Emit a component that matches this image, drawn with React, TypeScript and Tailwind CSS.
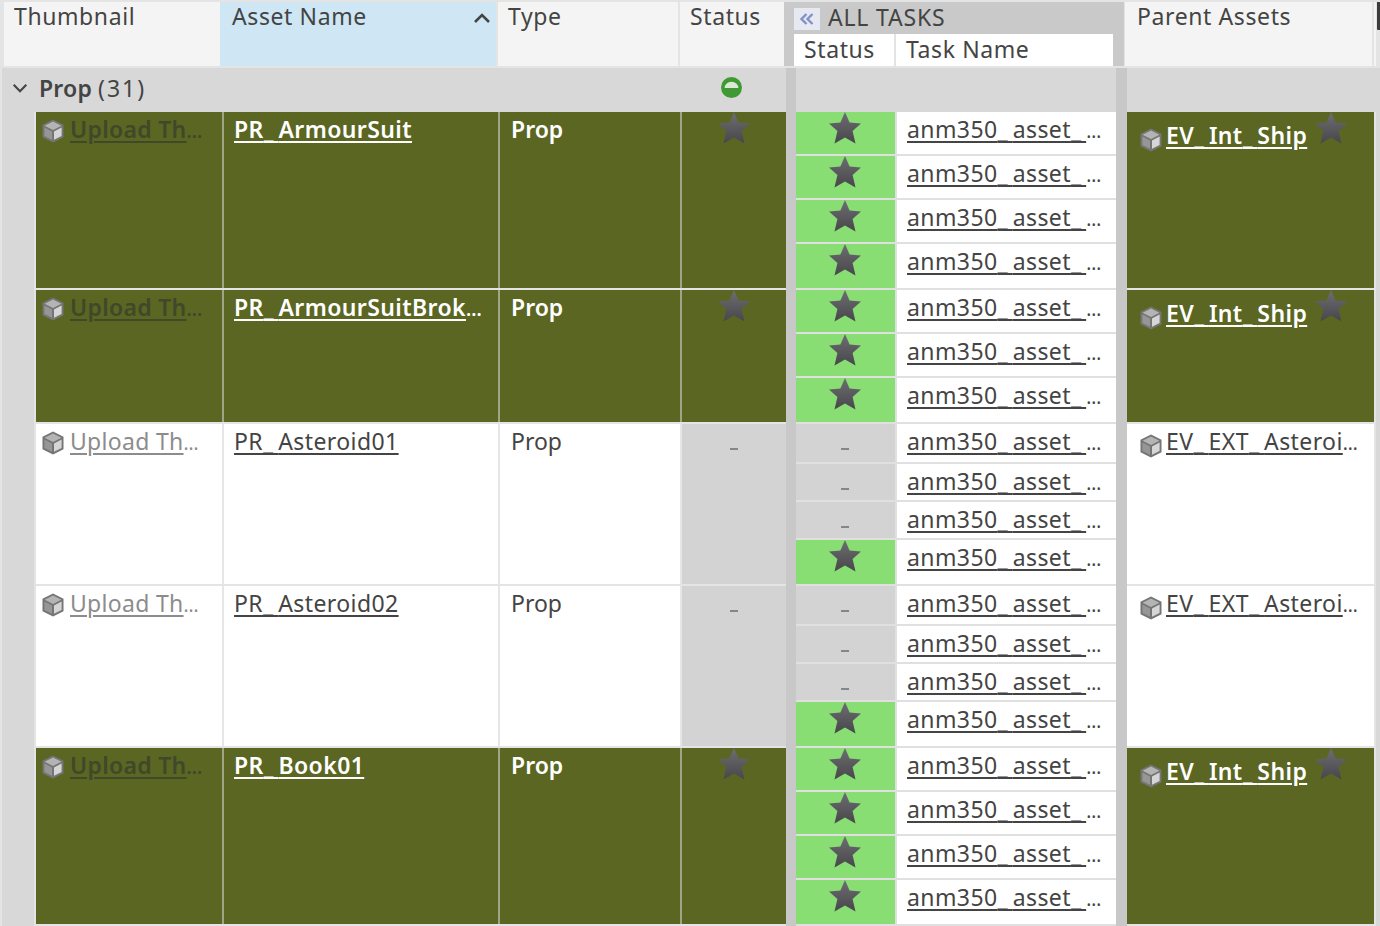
import React from 'react';

type TaskState = 'done' | 'none';

interface AssetRow {
  name: string;
  clipped?: boolean;
  highlighted: boolean;
  parent: string;
  parentClipped?: boolean;
  tasks: { state: TaskState; height: string }[];
}

const done = (height: string) => ({ state: 'done' as TaskState, height });
const none = (height: string) => ({ state: 'none' as TaskState, height });

const rows: AssetRow[] = [
  {
    name: 'PR_ArmourSuit',
    highlighted: true,
    parent: 'EV_Int_Ship',
    tasks: [done('h-[42px]'), done('h-[42px]'), done('h-[42px]'), done('h-[44px]')],
  },
  {
    name: 'PR_ArmourSuitBrok',
    clipped: true,
    highlighted: true,
    parent: 'EV_Int_Ship',
    tasks: [done('h-[42px]'), done('h-[42px]'), done('h-[44px]')],
  },
  {
    name: 'PR_Asteroid01',
    highlighted: false,
    parent: 'EV_EXT_Asteroi',
    parentClipped: true,
    tasks: [none('h-[38px]'), none('h-[36px]'), none('h-[36px]'), done('h-[44px]')],
  },
  {
    name: 'PR_Asteroid02',
    highlighted: false,
    parent: 'EV_EXT_Asteroi',
    parentClipped: true,
    tasks: [none('h-[38px]'), none('h-[36px]'), none('h-[36px]'), done('h-[44px]')],
  },
  {
    name: 'PR_Book01',
    highlighted: true,
    parent: 'EV_Int_Ship',
    tasks: [done('h-[42px]'), done('h-[42px]'), done('h-[42px]'), done('h-[44px]')],
  },
];

const Star = ({ id, className }: { id: string; className: string }) => (
  <svg viewBox="0 0 32 32" className={className}>
    <defs>
      <linearGradient id={id} x1="0" y1="0" x2="0" y2="1">
        <stop offset="0" stopColor="#6e6e72" />
        <stop offset="1" stopColor="#47474b" />
      </linearGradient>
    </defs>
    <path d="M16 0l4.6 10.6 11.4.9-8.4 7.5 2.9 12.5L16 25.5 5.5 31.5 8.4 19 0 11.5l11.4-.9z" fill={`url(#${id})`} />
  </svg>
);

const Cube = ({ className }: { className: string }) => (
  <svg viewBox="0 0 24 24" className={className}>
    <path d="M12 .5l10.5 5.2v12.6L12 23.5 1.5 18.3V5.7z" fill="#757575" />
    <path d="M12 2.5l8.4 4.2L12 11 3.6 6.7z" fill="#b4b4b4" />
    <path d="M3.4 8.4l7.6 4v8.4l-7.6-3.8z" fill="#969696" />
    <path d="M20.6 8.4L13 12.4v8.4l7.6-3.8z" fill="#d6d6d6" />
  </svg>
);

// the underscore is much wider in the original font
const Label = ({ text }: { text: string }) => (
  <span className="underline underline-offset-[3px] decoration-2 tracking-[0.4px] whitespace-nowrap">
    {text.split('_').map((part, i) => (
      <React.Fragment key={i}>
        {i > 0 && <span className="tracking-[5px]">_</span>}
        {part}
      </React.Fragment>
    ))}
  </span>
);

const Dots = () => <span className="text-[19px] tracking-[-0.5px]">…</span>;

const Row = ({ row, index }: { row: AssetRow; index: number }) => {
  const cell = row.highlighted ? 'bg-[#5a6622]' : 'bg-white';
  const text = row.highlighted ? 'font-semibold text-white' : 'text-[#444444]';
  const gap = row.highlighted ? 'bg-[#9fa688]' : 'bg-[#e6e6e6]';

  return (
    <div className="flex">
      <div className="ml-[2px] w-[32px] shrink-0 bg-[#d8d8d8]" />
      <div className="w-[2px] shrink-0 bg-[#e4e4e4]" />
      <div className="shrink-0 bg-[#e4e4e4] pb-[2px]">
        <div className={`flex h-full gap-[2px] ${gap}`}>
          <div className={`w-[186px] ${cell} flex items-start pl-[5px] pt-[2px]`}>
            <Cube className="w-[24px] h-[24px] mt-[5px] shrink-0" />
            <span className={`ml-[5px] whitespace-nowrap ${row.highlighted ? 'font-semibold text-[#40482a]' : 'text-[#8c8c8c]'}`}>
              <span className="underline underline-offset-[3px] decoration-2 tracking-[0.3px]">Upload Th</span>
              <Dots />
            </span>
          </div>
          <div className={`w-[274px] pl-[10px] pt-[2px] whitespace-nowrap ${cell} ${text}`}>
            <Label text={row.name} />
            {row.clipped && <Dots />}
          </div>
          <div className={`w-[180px] pl-[11px] pt-[2px] ${cell} ${text}`}>Prop</div>
          <div className={`w-[104px] flex justify-center ${row.highlighted ? cell : 'bg-[#d3d3d3]'}`}>
            {row.highlighted ? (
              <Star id={`row-star-${index}`} className="w-[32px] h-[32px]" />
            ) : (
              <span className="w-[8px] h-[2px] mt-[24px] bg-[#85858c]" />
            )}
          </div>
        </div>
      </div>
      <div className="w-[10px] shrink-0 bg-[#c8c8c8]" />
      <div className="w-[320px] shrink-0 flex flex-col gap-[2px] bg-[#e0e0e0] pb-[2px]">
        {row.tasks.map((task, i) => (
          <div key={i} className={`flex ${task.height}`}>
            <div className={`w-[99px] pr-[1px] flex justify-center ${task.state === 'done' ? 'bg-[#88dd73]' : 'bg-[#d3d3d3]'}`}>
              {task.state === 'done' ? (
                <Star id={`task-star-${index}-${i}`} className="w-[32px] h-[32px]" />
              ) : (
                <span className="w-[8px] h-[2px] mt-[24px] bg-[#85858c]" />
              )}
            </div>
            <div className="ml-[2px] flex-1 bg-white pl-[10px] pt-[2px] text-[#444444] whitespace-nowrap">
              <Label text="anm350_asset_" />
              <Dots />
            </div>
          </div>
        ))}
      </div>
      <div className="w-[11px] shrink-0 bg-[#c8c8c8]" />
      <div className="w-[247px] shrink-0 bg-[#e4e4e4] pb-[2px]">
        <div className={`flex items-start h-full pl-[12px] ${row.highlighted ? 'pt-[8px]' : 'pt-[2px]'} ${cell} ${text}`}>
          <Cube className="w-[24px] h-[24px] mt-[8px] shrink-0" />
          <span className="ml-[3px] whitespace-nowrap">
            <Label text={row.parent} />
            {row.parentClipped && <Dots />}
          </span>
          {row.highlighted && <Star id={`parent-star-${index}`} className="w-[32px] h-[32px] -mt-[8px] ml-[8px]" />}
        </div>
      </div>
      <div className="w-[2px] shrink-0 bg-[#e4e4e4]" />
      <div className="w-[4px] shrink-0 bg-[#d8d8d8]" />
    </div>
  );
};

export default function App() {
  return (
    <div className="w-[1380px] h-[926px] overflow-hidden bg-[#e4e4e4] font-['Noto_Sans','Open_Sans',sans-serif] text-[23px] leading-[30px] text-[#444444]">
      {/* Column headers */}
      <div className="flex h-[68px] py-[2px] tracking-[0.6px]">
        <div className="ml-[4px] w-[216px] bg-[#f4f4f4] pl-[10px] leading-[28px]">Thumbnail</div>
        <div className="w-[276px] bg-[#cfe7f5] pl-[12px] pr-[4px] flex justify-between leading-[28px]">
          <span>Asset Name</span>
          <svg viewBox="0 0 20 20" className="w-[20px] h-[20px] mt-[6px]" fill="none" stroke="#444444" strokeWidth="2.6">
            <path d="M3 14l7-7 7 7" />
          </svg>
        </div>
        <div className="ml-[2px] w-[180px] bg-[#f4f4f4] pl-[10px] leading-[28px]">Type</div>
        <div className="ml-[2px] w-[104px] bg-[#f4f4f4] pl-[10px] leading-[28px]">Status</div>
        <div className="w-[340px] bg-[#c9c9c9] pl-[10px] flex flex-col">
          <div className="h-[32px] flex items-start">
            <span className="mt-[6px] w-[26px] h-[22px] bg-[#e6e9f2] flex items-center justify-center">
              <svg viewBox="0 0 16 16" className="w-[16px] h-[16px]" fill="none" stroke="#8391c9" strokeWidth="2.4">
                <path d="M7.5 3L2.5 8l5 5M13.5 3l-5 5 5 5" />
              </svg>
            </span>
            <span className="ml-[8px] tracking-[0.8px]">ALL TASKS</span>
          </div>
          <div className="flex h-[32px] w-[319px] bg-[#e3e3e3] gap-[2px]">
            <div className="w-[100px] bg-white pl-[10px]">Status</div>
            <div className="flex-1 bg-white pl-[10px]">Task Name</div>
          </div>
        </div>
        <div className="ml-[1px] w-[247px] bg-[#f4f4f4] pl-[12px] leading-[28px]">Parent Assets</div>
        <div className="ml-[2px] w-[2px] bg-[#f4f4f4]" />
        <div className="ml-[1px] w-[3px] h-[28px] rounded-bl-[1px] bg-[#3c3c3c]" />
      </div>

      {/* Group row */}
      <div className="flex h-[44px] ml-[2px] bg-[#d8d8d8]">
        <div className="w-[680px] flex items-center pl-[9px] pb-[4px]">
          <svg viewBox="0 0 20 20" className="w-[18px] h-[18px]" fill="none" stroke="#444444" strokeWidth="2.4">
            <path d="M3 6.5l7 7 7-7" />
          </svg>
          <span className="ml-[10px] font-semibold tracking-[0.2px]">Prop</span>
          <span className="ml-[6px] tracking-[2px]">(31)</span>
        </div>
        <div className="w-[104px] flex justify-center items-center">
          <svg viewBox="0 0 20 20" className="w-[21px] h-[21px] -mt-[5px] -ml-[5px]">
            <circle cx="10" cy="10" r="10" fill="#3f9a33" />
            <path d="M3.5 10.5a6.5 6 0 0 1 13 0z" fill="#dbe8d6" />
          </svg>
        </div>
        <div className="w-[10px] bg-[#c8c8c8]" />
        <div className="w-[320px]" />
        <div className="w-[11px] bg-[#c8c8c8]" />
      </div>

      {rows.map((row, i) => (
        <Row key={row.name} row={row} index={i} />
      ))}
    </div>
  );
}
